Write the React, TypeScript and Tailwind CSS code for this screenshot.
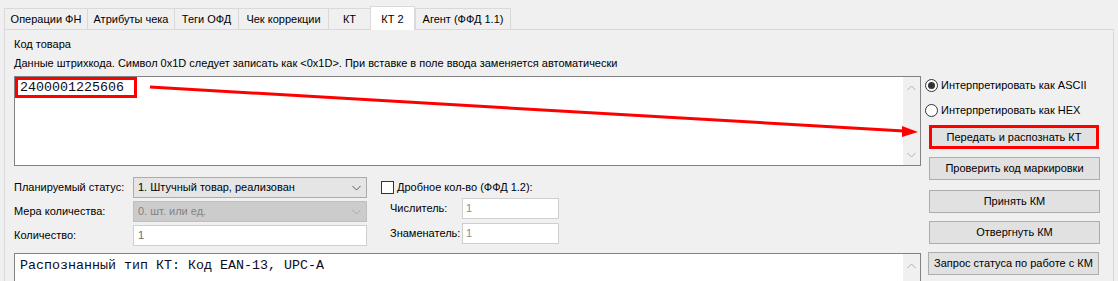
import React from "react";

const Chevron = ({ up, color }: { up?: boolean; color: string }) => (
  <svg width="9" height="6" viewBox="0 0 9 6">
    <polyline
      points={up ? "0.5,5 4.5,1 8.5,5" : "0.5,1 4.5,5 8.5,1"}
      fill="none"
      stroke={color}
      strokeWidth="1"
    />
  </svg>
);

const Tab = ({ w, label, last }: { w: string; label: string; last?: boolean }) => (
  <div
    className={`${w} h-[21px] flex items-center justify-center border-t border-l border-[#d9d9d9] bg-[#f0f0f0] ${last ? "border-r" : ""}`}
  >
    {label}
  </div>
);

const Btn = ({ label, cls }: { label: string; cls: string }) => (
  <div
    className={`w-[171px] h-[23px] flex items-center justify-center bg-[#e1e1e1] border border-[#adadad] ${cls}`}
  >
    {label}
  </div>
);

export default function App() {
  return (
    <div className="w-[1118px] h-[281px] bg-[#f0f0f0] overflow-hidden relative font-['Liberation_Sans',sans-serif] text-[11px] text-black whitespace-nowrap">
      {/* tabs */}
      <div className="flex items-end h-[29px] pl-[4px]">
        <Tab w="w-[83px]" label="Операции ФН" />
        <Tab w="w-[87px]" label="Атрибуты чека" />
        <Tab w="w-[64px]" label="Теги ОФД" />
        <Tab w="w-[90px]" label="Чек коррекции" />
        <Tab w="w-[42px]" label="КТ" />
        <div className="w-[45px] h-[24px] -mb-px relative z-10 flex items-start pt-[4px] justify-center bg-white border-t border-l border-r border-[#d9d9d9]">
          КТ 2
        </div>
        <Tab w="w-[96px]" label="Агент (ФФД 1.1)" last />
      </div>

      {/* panel */}
      <div className="ml-[4px] w-[1110px] h-[260px] border border-[#d9d9d9] bg-[#f0f0f0] pl-[9px]">
        <div className="mt-[7px] h-[14px] leading-[14px]">Код товара</div>
        <div className="mt-[5px] h-[14px] leading-[14px]">
          Данные штрихкода. Символ 0x1D следует записать как &lt;0x1D&gt;. При вставке в поле ввода заменяется автоматически
        </div>

        <div className="mt-[6px] flex">
          {/* left column */}
          <div className="w-[907px] flex flex-col">
            <div className="h-[90px] border border-[#828282] bg-white flex">
              <div className="flex-1">
                <div className="w-[122px] h-[21px] border-[3px] border-[#ff0000] pl-[2px] flex items-center font-['Liberation_Mono',monospace] text-[13.33px] text-[#0c0c20]">
                  2400001225606
                </div>
              </div>
              <div className="w-[17px] bg-[#f0f0f0] flex flex-col items-center justify-between pt-[8px] pb-[7px]">
                <Chevron up color="#b0b0b0" />
                <Chevron color="#b0b0b0" />
              </div>
            </div>

            {/* form */}
            <div className="mt-[11px] flex">
              <div className="w-[119px] flex flex-col gap-[3px]">
                <div className="h-[21px] flex items-center">Планируемый статус:</div>
                <div className="h-[21px] flex items-center">Мера количества:</div>
                <div className="h-[21px] flex items-center">Количество:</div>
              </div>
              <div className="w-[234px] flex flex-col gap-[3px]">
                <div className="h-[21px] bg-[#e5e5e5] border border-[#acacac] flex items-center pl-[4px] pr-[5px] justify-between">
                  <span>1. Штучный товар, реализован</span>
                  <Chevron color="#5a5a5a" />
                </div>
                <div className="h-[21px] bg-[#cccccc] border border-[#bfbfbf] flex items-center pl-[4px] pr-[5px] justify-between text-[#838383]">
                  <span>0. шт. или ед.</span>
                  <Chevron color="#a8a8a8" />
                </div>
                <div className="h-[21px] bg-white border border-[#cfcfcf] flex items-center pl-[4px] text-[#6d6d6d]">
                  1
                </div>
              </div>
              <div className="ml-[14px] flex flex-col">
                <div className="h-[21px] flex items-center">
                  <div className="w-[13px] h-[13px] border border-[#333333] bg-white" />
                  <span className="ml-[3px]">Дробное кол-во (ФФД 1.2):</span>
                </div>
                <div className="h-[21px] flex items-center pl-[9px]">
                  <span className="w-[72px]">Числитель:</span>
                  <div className="w-[97px] h-[21px] bg-white border border-[#cfcfcf] flex items-center pl-[3px] text-[#8d8d8d]">
                    1
                  </div>
                </div>
                <div className="mt-[4px] h-[21px] flex items-center pl-[9px]">
                  <span className="w-[72px]">Знаменатель:</span>
                  <div className="w-[97px] h-[21px] bg-white border border-[#cfcfcf] flex items-center pl-[3px] text-[#8d8d8d]">
                    1
                  </div>
                </div>
              </div>
            </div>

            <div className="mt-[7px] h-[60px] border border-[#828282] bg-white flex">
              <div className="flex-1 pl-[5px] pt-[5px] font-['Liberation_Mono',monospace] text-[13.33px] leading-[14px] text-[#0c0c20]">
                Распознанный тип КТ: Код EAN-13, UPC-A
              </div>
              <div className="w-[17px] bg-[#f0f0f0] flex flex-col items-center pt-[9px]">
                <Chevron up color="#b0b0b0" />
              </div>
            </div>
          </div>

          {/* right column */}
          <div className="ml-[4px] flex flex-col">
            <div className="h-[18px] flex items-center">
              <div className="w-[13px] h-[13px] rounded-full border border-[#333333] bg-white flex items-center justify-center">
                <div className="w-[7px] h-[7px] rounded-full bg-[#333333]" />
              </div>
              <span className="ml-[3px]">Интерпретировать как ASCII</span>
            </div>
            <div className="mt-[7px] h-[18px] flex items-center">
              <div className="w-[13px] h-[13px] rounded-full border border-[#333333] bg-white" />
              <span className="ml-[3px]">Интерпретировать как HEX</span>
            </div>
            <div className="mt-[6px] ml-[4px] w-[170px] h-[24px] border-[3px] border-[#ff0000] bg-[#e1e1e1] flex items-center justify-center">
              Передать и распознать КТ
            </div>
            <Btn label="Проверить код маркировки" cls="mt-[8px] ml-[4px]" />
            <Btn label="Принять КМ" cls="mt-[10px] ml-[4px]" />
            <Btn label="Отвергнуть КМ" cls="mt-[8px] ml-[4px]" />
            <Btn label="Запрос статуса по работе с КМ" cls="mt-[8px] ml-[3px]" />
          </div>
        </div>
      </div>

      {/* annotation arrow */}
      <svg className="absolute left-0 top-0 pointer-events-none" width="1118" height="281">
        <line x1="150" y1="87" x2="904" y2="131" stroke="#ff0000" strokeWidth="3" />
        <polygon points="902,126 918,132 902,137" fill="#ff0000" />
      </svg>
    </div>
  );
}
